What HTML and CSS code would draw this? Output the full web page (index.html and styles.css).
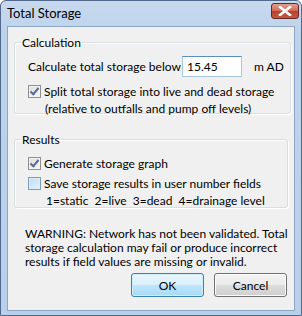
FILE: index.html
```html
<!DOCTYPE html>
<html lang="en">
<head>
    <meta charset="UTF-8">
    <title>Total Storage</title>
    <link rel="stylesheet" href="styles.css">
</head>
<body>
<div class="window">
    <div class="titlebar">
        <span class="title">Total Storage</span>
        <button class="close" type="button" aria-label="Close">
            <svg width="14" height="10" viewBox="0 0 14 10">
                <path d="M2 1 L12 9 M12 1 L2 9" stroke="#ffffff" stroke-width="2.6" stroke-linecap="square"/>
            </svg>
        </button>
    </div>
    <div class="client">
        <fieldset class="group calc">
            <legend>Calculation</legend>
            <div class="row">
                <label for="below" class="below-label">Calculate total storage below</label>
                <input type="text" id="below" class="textbox" value="15.45">
                <span class="unit">m AD</span>
            </div>
            <label class="check">
                <span class="box checked"></span>
                <span>Split total storage into live and dead storage</span>
            </label>
            <div class="note">(relative to outfalls and pump off levels)</div>
        </fieldset>

        <fieldset class="group results">
            <legend>Results</legend>
            <label class="check">
                <span class="box checked"></span>
                <span>Generate storage graph</span>
            </label>
            <label class="check">
                <span class="box hot"></span>
                <span>Save storage results in user number fields</span>
            </label>
            <div class="codes">1=static&nbsp; 2=live&nbsp; 3=dead&nbsp; 4=drainage level</div>
        </fieldset>

        <p class="warning">WARNING: Network has not been validated. Total<br>storage calculation may fail or produce incorrect<br>results if field values are missing or invalid.</p>

        <div class="buttons">
            <button type="button" class="btn default">OK</button>
            <button type="button" class="btn">Cancel</button>
        </div>
    </div>
</div>
</body>
</html>
```

FILE: styles.css
```css
body {
    margin: 0;
    padding: 0;
    background: #ffffff;
    font-family: Lato, "Liberation Sans", Arial, sans-serif;
    font-size: 12px;
    color: #000;
}
.window {
    width: 302px;
    height: 316px;
    box-sizing: border-box;
    border: 1px solid #51698a;
    border-radius: 6px 6px 0 0;
    background: linear-gradient(#c8d9ee, #bed3eb 30px, #b9cfea);
    padding: 0 6px 4px 6px;
    display: flex;
    flex-direction: column;
}
.titlebar {
    height: 25px;
    display: flex;
    align-items: center;
    justify-content: space-between;
}
.title {
    font-size: 13px;
    color: #000;
    margin-top: -2px;
}
.close {
    width: 28px;
    height: 16px;
    margin: -5px -4px 0 0;
    padding: 0;
    border: 1px solid #5c2a2a;
    border-radius: 3px;
    background: linear-gradient(#e3a08f, #cf6a55 50%, #b8402a 51%, #c9573f);
    display: flex;
    align-items: center;
    justify-content: center;
}
.client {
    flex: 1;
    background: #f0f0f0;
    border: 1px solid #8ea6c3;
    padding: 8px 6px 0 6px;
    display: flex;
    flex-direction: column;
    white-space: nowrap;
}
.group {
    margin: 0;
    border: 1px solid #d5dfe5;
    border-radius: 3px;
    padding: 0 6px 0 13px;
    box-shadow: inset 1px 1px 0 #ffffff, 1px 1px 0 #ffffff;
}
.group legend {
    padding: 0 1px;
    margin-left: -7px;
    line-height: 15px;
}
.calc {
    height: 77px;
}
.results {
    margin-top: 18px;
    height: 74px;
}
.row {
    display: flex;
    align-items: center;
    margin-top: 6px;
}
.below-label {
    width: 154px;
}
.textbox {
    width: 60px;
    height: 21px;
    box-sizing: border-box;
    border: 1px solid #a6c8e4;
    border-top-color: #5790c0;
    background: #ffffff;
    font: inherit;
    font-size: 12px;
    padding: 0 4px;
    outline: none;
}
.unit {
    margin-left: 12px;
}
.check {
    display: flex;
    align-items: center;
    gap: 3px;
    height: 15px;
}
.calc .check {
    margin-top: 7px;
}
.results .check {
    margin-top: 9px;
}
.results .check + .check {
    margin-top: 5px;
}
.box {
    width: 11px;
    height: 11px;
    border: 1px solid #8f8f8f;
    background: linear-gradient(135deg, #dcdcdc, #f6f6f6);
    box-shadow: inset 0 0 0 1px #f4f4f4;
    position: relative;
    flex: none;
}
.box.hot {
    border-color: #7f9db9;
    background: linear-gradient(135deg, #b9dcf6, #e7f3fc);
    box-shadow: inset 0 0 0 1px #dbeefc;
}
.box.checked::after {
    content: "";
    position: absolute;
    left: 3px;
    top: 0px;
    width: 3px;
    height: 7px;
    border: solid #5a6a94;
    border-width: 0 2px 2px 0;
    transform: rotate(40deg);
}
.note {
    margin: 2px 0 0 17px;
}
.codes {
    margin: 2px 0 0 18px;
}
.warning {
    margin: 19px 0 0 11px;
    line-height: 14px;
}
.buttons {
    display: flex;
    justify-content: flex-end;
    gap: 10px;
    margin: 4px 1px 0 0;
}
.btn {
    width: 73px;
    height: 24px;
    border: 1px solid #707070;
    border-radius: 3px;
    background: linear-gradient(#f2f2f2, #ebebeb 50%, #dddddd 51%, #cfcfcf);
    box-shadow: inset 0 0 0 1px #fbfbfb;
    font: inherit;
    font-size: 12px;
    padding: 0;
    color: #000;
}
.btn.default {
    border-color: #3c7fb1;
    background: linear-gradient(#eaf6fd, #d9f0fc 50%, #bee6fd 51%, #a7d9f5);
    box-shadow: inset 0 0 0 1px #cdeefb;
}
```
